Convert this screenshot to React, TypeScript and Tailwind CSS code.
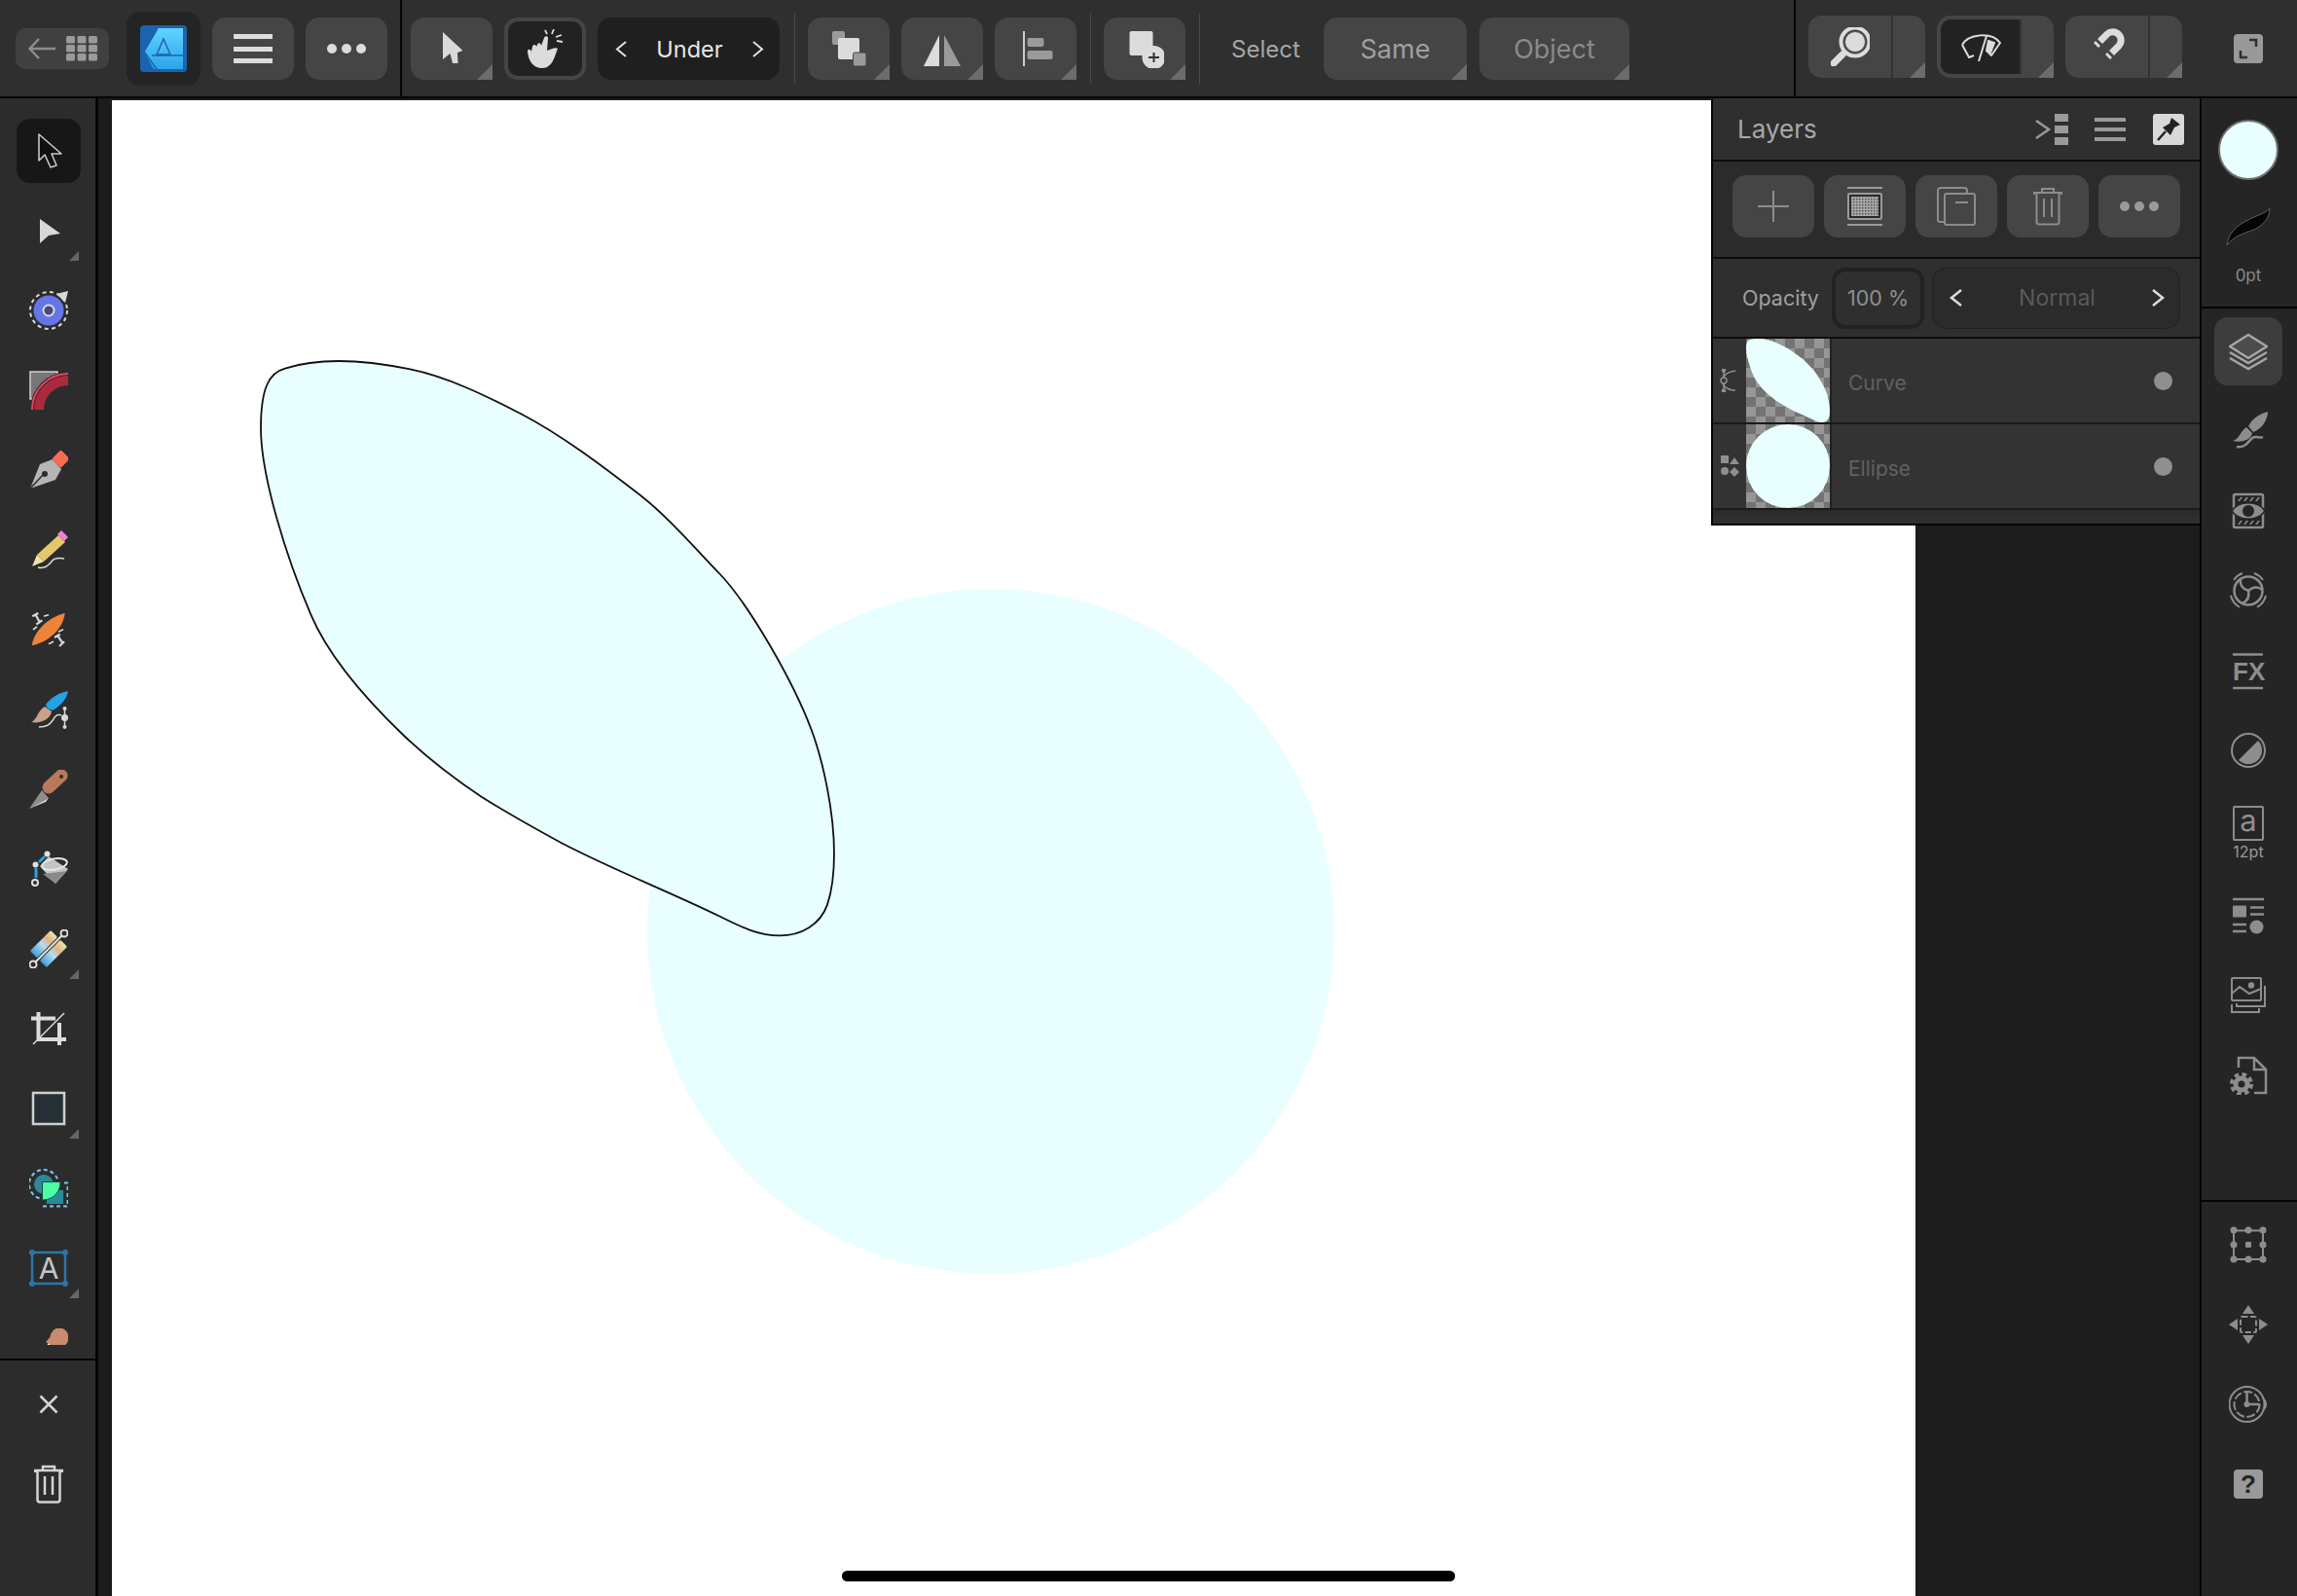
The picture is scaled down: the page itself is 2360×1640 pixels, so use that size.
import React from 'react';

const CURVE_PATH =
  'M292.9 378.6 C310 373 330 371 348 371 C372 371 397 374.5 421.4 379.4 C459 387 498 406 535.7 425.5 C576 446.5 618 478 658 509 C685 530 712 561 739.8 590 C770 622 815 700 833.7 750 C846 783 857 835 857 876.5 C857 896 855 915 850 929.6 C843 950 823 961.4 801 961.4 C780 961.4 762 953 739.8 941.8 C685 915 630 894 576.5 866 C549 851 522 836 495 819 C468 801 439 779 413 754 C385 727 340 680 319.4 631.6 C295 575 268 490 268 439.8 C268 420 270 405 274.5 395 C278 387 284 381 292.9 378.6 Z';

const Corner = ({ size = 'big' }: { size?: 'big' | 'small' }) =>
  size === 'big' ? (
    <span className="absolute right-0 bottom-0 w-4 h-4 bg-[#6c6c6c] [clip-path:polygon(100%_0,100%_100%,0_100%)]" />
  ) : (
    <span className="absolute right-[17px] bottom-[10px] w-[10px] h-[10px] bg-[#666666] [clip-path:polygon(100%_0,100%_100%,0_100%)]" />
  );

const Btn = ({ children, corner, className = '' }: { children: React.ReactNode; corner?: boolean; className?: string }) => (
  <div className={`relative h-16 w-[84px] shrink-0 rounded-[14px] bg-[#454545] flex items-center justify-center ${className}`}>
    {children}
    {corner && <Corner />}
  </div>
);

const Sep = ({ className = '' }: { className?: string }) => <div className={`w-px h-[72px] bg-[#4a4a4a] shrink-0 ${className}`} />;

const Ico = ({ s = 40, children, className = '' }: { s?: number; children: React.ReactNode; className?: string }) => (
  <svg width={s} height={s} viewBox={`0 0 ${s} ${s}`} className={`block shrink-0 ${className}`}>
    {children}
  </svg>
);

const Logo = () => (
  <svg width="48" height="48" viewBox="0 0 48 48">
    <defs>
      <linearGradient id="lg" x1="0" y1="0" x2="0" y2="1">
        <stop offset="0" stopColor="#62d4ff" />
        <stop offset="1" stopColor="#2ba4ea" />
      </linearGradient>
    </defs>
    <rect width="48" height="48" rx="4" fill="#1c63ae" />
    <path d="M18 3H44V45H14L4 27Z" fill="url(#lg)" />
    <path d="M18 3L4 27L19 48M24 14L17 30H31ZM12 31H44" fill="none" stroke="#1c63ae" strokeWidth="1.500" />
  </svg>
);

const Dots = ({ color }: { color: string }) => (
  <svg width="40" height="10" viewBox="0 0 40 10">
    <circle cx="5" cy="5" r="5" fill={color} />
    <circle cx="20" cy="5" r="5" fill={color} />
    <circle cx="35" cy="5" r="5" fill={color} />
  </svg>
);

const Trash = ({ color, w = 2.5 }: { color: string; w?: number }) => (
  <svg width="30" height="40" viewBox="0 0 30 40" fill="none" stroke={color} strokeWidth={w}>
    <path d="M1 8V6H29V8M9 6V2H21V6M3.500 7V36C3.500 38 4.500 38.500 6 38.500H24C25.500 38.500 26.500 38 26.500 36V7M11 12V31M19 12V31" />
  </svg>
);

/* left toolbar icons */
const tools: { icon: React.ReactNode; corner?: boolean; active?: boolean }[] = [
  {
    active: true,
    icon: (
      <Ico>
        <path d="M10 3V30L16 24L22 37L28 35L23 23H33Z" fill="#111111" stroke="#c8c8c8" strokeWidth="1.6" strokeLinejoin="round" />
      </Ico>
    ),
  },
  {
    corner: true,
    icon: (
      <Ico>
        <path d="M11 8L32 23L20 25L11 33Z" fill="#d9d9d9" />
      </Ico>
    ),
  },
  {
    icon: (
      <Ico>
        <circle cx="20" cy="20" r="19" fill="none" stroke="#d9d9d9" strokeWidth="2" strokeDasharray="4 3.500" />
        <circle cx="20" cy="20" r="15.500" fill="#6675e6" />
        <circle cx="20" cy="20" r="5.500" fill="#444a77" stroke="#d9d9d9" strokeWidth="2" />
        <path d="M28 3L40 0L37 12Z" fill="#d9d9d9" />
      </Ico>
    ),
  },
  {
    icon: (
      <Ico>
        <rect x="1" y="1" width="28" height="28" fill="#777777" stroke="#d0d0d0" strokeWidth="1.500" />
        <circle cx="40" cy="40" r="39" fill="#2c2c2c" />
        <circle cx="40" cy="40" r="37" fill="none" stroke="#f0405c" strokeWidth="2" />
        <circle cx="40" cy="40" r="30" fill="none" stroke="#aa2b3d" strokeWidth="10" />
      </Ico>
    ),
  },
  {
    icon: (
      <Ico>
        <path d="M1 39L11 14L24 9L33 19L27 30Z" fill="#b5b5b5" />
        <path d="M1 39L15 24" stroke="#2c2c2c" strokeWidth="1.500" />
        <circle cx="16" cy="24" r="3" fill="#2c2c2c" />
        <rect x="26" y="2" width="13" height="13" rx="1.500" transform="rotate(45 32.500 8.500)" fill="#fb6c52" />
      </Ico>
    ),
  },
  {
    icon: (
      <Ico>
        <path d="M3 37L8 25L15 32Z" fill="#f0e3b0" />
        <path d="M8 25L30 5L37 12L15 32Z" fill="#e2c76c" />
        <path d="M29 4L33 0L40 7L36 11Z" fill="#ef7fe0" />
        <path d="M9 38C16 40 20 36 23 32C25 29 30 28 36 29" fill="none" stroke="#d9d9d9" strokeWidth="1.500" />
      </Ico>
    ),
  },
  {
    icon: (
      <Ico>
        <path d="M2.700 36.300C5 22 18 8 36.700 3C35 18 22 32 2.700 36.300Z" fill="#ef833a" />
        <path d="M3.300 6.300L9.300 3M7.300 14.700L13.300 10.300M6.700 4.700L10.700 12.300M26 28L31.700 24.700M31 37L36 32.300M29.300 26.300L35 34.700" stroke="#d9d9d9" strokeWidth="2.200" fill="none" />
        <path d="M15 6.300L20 4.700M20 34.700L25 32.300M30 22.300L35 19.700M4 20L8 17" stroke="#d9d9d9" strokeWidth="1.600" />
      </Ico>
    ),
  },
  {
    icon: (
      <Ico>
        <path d="M19 19L17 15C22 8 30 3 40 1C39 8 34 15 24 21Z" fill="#23a2e6" />
        <path d="M16 17L23 22C22 30 12 35 2 33C8 31 8 22 16 17Z" fill="#c8a08c" />
        <path d="M10 38C20 38 22 34 25 30C27 26 30 25 33 26" fill="none" stroke="#d9d9d9" strokeWidth="1.500" />
        <path d="M36.500 19V38" stroke="#d9d9d9" strokeWidth="1.500" />
        <circle cx="36.500" cy="19" r="2" fill="#d9d9d9" />
        <circle cx="36.500" cy="28.500" r="3.500" fill="#d9d9d9" />
        <circle cx="36.500" cy="38" r="2" fill="#d9d9d9" />
      </Ico>
    ),
  },
  {
    icon: (
      <Ico>
        <path d="M20 18L33 6" stroke="#b8795c" strokeWidth="13" strokeLinecap="round" />
        <circle cx="33" cy="7" r="2" fill="#3a2a22" />
        <path d="M0 40L13 21L20 29Z" fill="#8d8d8d" />
        <path d="M0 40L20 29L17 33Z" fill="#d9d9d9" />
      </Ico>
    ),
  },
  {
    icon: (
      <Ico>
        <path d="M11 17L20 7L40 20L27 35Z" fill="#c4c4c4" />
        <path d="M14 25L39 22L27 35Z" fill="#8a8a8a" />
        <ellipse cx="26" cy="15" rx="13" ry="5.500" transform="rotate(-10 26 15)" fill="none" stroke="#e6e6e6" strokeWidth="2" />
        <path d="M7 19V29M10 13L16 7" stroke="#2aa0e2" strokeWidth="3" />
        <circle cx="6.500" cy="15.500" r="3" fill="#e0e0e0" />
        <circle cx="18.500" cy="4.500" r="3" fill="#e0e0e0" />
        <circle cx="6" cy="34" r="3" fill="#2c2c2c" stroke="#e0e0e0" strokeWidth="2" />
      </Ico>
    ),
  },
  {
    corner: true,
    icon: (
      <Ico>
        <defs>
          <linearGradient id="gr" x1="0" y1="0" x2="1" y2="0">
            <stop offset="0" stopColor="#3f9fd6" />
            <stop offset="0.45" stopColor="#b5dcf0" />
            <stop offset="0.7" stopColor="#e0b487" />
            <stop offset="1" stopColor="#ede2a6" />
          </linearGradient>
        </defs>
        <g transform="rotate(-45 20 20)">
          <rect x="5" y="8" width="30" height="10" rx="1.500" fill="url(#gr)" />
          <rect x="5" y="22" width="30" height="10" rx="1.500" fill="url(#gr)" />
          <path d="M-2 20H42" stroke="#e0e0e0" strokeWidth="2" />
        </g>
        <circle cx="4" cy="36" r="3.500" fill="#2c2c2c" stroke="#e0e0e0" strokeWidth="2" />
        <circle cx="36" cy="4" r="3.500" fill="#2c2c2c" stroke="#e0e0e0" strokeWidth="2" />
      </Ico>
    ),
  },
  {
    icon: (
      <Ico>
        <path d="M9.500 3V31H38M2 9.500H27M31 14V37" fill="none" stroke="#dcdcdc" strokeWidth="4" />
        <path d="M4 36L36 4" stroke="#dcdcdc" strokeWidth="1.500" />
      </Ico>
    ),
  },
  {
    corner: true,
    icon: (
      <Ico>
        <rect x="4" y="4" width="32" height="32" fill="#263036" stroke="#cfcfcf" strokeWidth="2.500" />
      </Ico>
    ),
  },
  {
    icon: (
      <Ico>
        <circle cx="15" cy="16" r="10" fill="#2a8a9c" />
        <circle cx="15" cy="16" r="15" fill="none" stroke="#7cc8ee" strokeWidth="2" strokeDasharray="4 3" />
        <path d="M18 22H35V36H18Z" fill="#2a8a9c" />
        <path d="M14 38.500H39.500V14.500H33" fill="none" stroke="#7cc8ee" strokeWidth="2" strokeDasharray="4 3" />
        <path d="M13.500 13.500H32C32 24 25 32 13.500 32Z" fill="#4dffa3" stroke="#1d4a4a" strokeWidth="1" />
      </Ico>
    ),
  },
  {
    corner: true,
    icon: (
      <Ico>
        <rect x="3" y="4" width="34" height="32" fill="none" stroke="#2c76a6" strokeWidth="2.500" />
        <circle cx="3" cy="4" r="3" fill="#2c76a6" />
        <circle cx="37" cy="4" r="3" fill="#2c76a6" />
        <circle cx="3" cy="36" r="3" fill="#2c76a6" />
        <circle cx="37" cy="36" r="3" fill="#2c76a6" />
        <text x="20" y="31" textAnchor="middle" fontFamily="Inter, sans-serif" fontSize="30" fill="#c4c4c4">
          A
        </text>
      </Ico>
    ),
  },
  {
    icon: (
      <Ico>
        <ellipse cx="31" cy="9.500" rx="9.500" ry="10" fill="#c98a6d" />
        <path d="M24 6L17 14L25 19Z" fill="#c98a6d" />
        <path d="M16 20L20 15L24 20Z" fill="#e6e6e6" />
      </Ico>
    ),
  },
];

const G = '#8d8d8d';

const RightItem = ({ children, h = 'h-[82px]' }: { children: React.ReactNode; h?: string }) => (
  <div className={`${h} shrink-0 flex flex-col items-center justify-center`}>{children}</div>
);

const rightIcons: React.ReactNode[] = [
  <Ico key="brush">
    <path d="M40 0C40 8 34 18 25 21L20 15C24 7 32 2 40 0Z" fill={G} />
    <path d="M18 16L24 22C22 30 12 32 4 30C11 28 11 21 18 16Z" fill={G} />
    <path d="M8 36C16 38 20 31 24 27C28 24 31 28 35 26" fill="none" stroke={G} strokeWidth="2.500" />
  </Ico>,
  <Ico key="adj">
    <rect x="5" y="3" width="30" height="34" rx="1.500" fill="none" stroke={G} strokeWidth="2.500" />
    <path d="M9 10L12 6H14L11 10ZM15 10L18 6H20L17 10ZM21 10L24 6H26L23 10ZM27 10L30 6H32L29 10ZM9 34L12 30H14L11 34ZM15 34L18 30H20L17 34ZM21 34L24 30H26L23 34ZM27 34L30 30H32L29 34Z" fill={G} />
    <path d="M3 20C10 9 30 9 37 20C30 31 10 31 3 20Z" fill={G} stroke="#252525" strokeWidth="1.500" />
    <circle cx="20" cy="20" r="6" fill="#252525" />
  </Ico>,
  <Ico key="aperture">
    <g fill="none" stroke={G} strokeWidth="2">
      <path d="M5 9A19 19 0 0 1 14 2M26 2A19 19 0 0 1 35 9M38 25A19 19 0 0 1 29 37M11 37A19 19 0 0 1 2 25" />
      <circle cx="20" cy="20" r="14.500" strokeWidth="2.500" />
      <path d="M12 8C11 14 14 18 20 20" strokeWidth="2.500" />
      <path d="M12 8C11 14 14 18 20 20" strokeWidth="2.500" transform="rotate(120 20 20)" />
      <path d="M12 8C11 14 14 18 20 20" strokeWidth="2.500" transform="rotate(240 20 20)" />
    </g>
  </Ico>,
  <Ico key="fx">
    <path d="M4 3.500H35M4 38H35" stroke={G} strokeWidth="2.500" />
    <text x="4" y="30" fontFamily="Liberation Sans, sans-serif" fontWeight="700" fontSize="26" fill={G}>
      FX
    </text>
  </Ico>,
  <Ico key="half">
    <circle cx="20" cy="20" r="17" fill="none" stroke={G} strokeWidth="2" />
    <path d="M10 29L30 9A14 14 0 0 1 10 29Z" fill={G} transform="translate(0 1)" />
  </Ico>,
];

const rightIconsAfter: React.ReactNode[] = [
  <Ico key="list">
    <path d="M4 3H36M22 11.500H36M22 18.500H36M4 29H18M4 36H18" stroke={G} strokeWidth="2.500" />
    <rect x="4" y="9.500" width="14" height="12" rx="1" fill={G} />
    <circle cx="28.500" cy="31.500" r="7" fill={G} />
  </Ico>,
  <Ico key="imgs">
    <rect x="3" y="2" width="30" height="23" rx="1" fill="none" stroke={G} strokeWidth="2" />
    <path d="M3 18L11 11L21 18L33 13" fill="none" stroke={G} strokeWidth="2" />
    <circle cx="23" cy="9.500" r="3.200" fill={G} />
    <path d="M37 10V31H8V28M3 29V37H31V33" fill="none" stroke={G} strokeWidth="2" />
  </Ico>,
  <Ico key="doc">
    <path d="M10 12V2H26L38 14V38H26" fill="none" stroke={G} strokeWidth="2.500" />
    <path d="M26 2V14H38" fill="none" stroke={G} strokeWidth="2.500" />
    <circle cx="13" cy="29" r="6" fill="none" stroke={G} strokeWidth="5" />
    <circle cx="13" cy="29" r="10" fill="none" stroke={G} strokeWidth="4" strokeDasharray="4.500 3.400" />
  </Ico>,
];

const rightIconsBottom: React.ReactNode[] = [
  <Ico key="transform">
    <rect x="5" y="5.500" width="30" height="29.500" fill="none" stroke={G} strokeWidth="2" />
    {[
      [5, 5],
      [20, 5],
      [35, 5],
      [5, 20],
      [35, 20],
      [5, 35],
      [20, 35],
      [35, 35],
    ].map(([x, y]) => (
      <circle key={`${x}-${y}`} cx={x} cy={y} r="3.500" fill={G} />
    ))}
    <rect x="17" y="17" width="6" height="6" rx="1" fill={G} />
  </Ico>,
  <Ico key="move">
    <path d="M20 0L26 9H14ZM20 40L14 31H26ZM0 20L9 14V26ZM40 20L31 26V14Z" fill={G} />
    <rect x="12" y="12" width="16" height="16" rx="1.500" fill="none" stroke={G} strokeWidth="2" strokeDasharray="6 2.500" />
  </Ico>,
  <Ico key="history">
    <circle cx="18.500" cy="20" r="18" fill="none" stroke={G} strokeWidth="2" />
    <path d="M36 14C40 16 40 24 36 26Z" fill={G} />
    <circle cx="18.500" cy="20" r="13" fill="none" stroke={G} strokeWidth="2" strokeDasharray="9 2.500" />
    <path d="M18.500 8V20H31" fill="none" stroke={G} strokeWidth="2.500" />
    <circle cx="18.500" cy="20" r="3" fill={G} />
  </Ico>,
  <div key="help" className="w-[30px] h-[30px] rounded-[4px] bg-[#9a9a9a] flex items-center justify-center text-[#252525] text-[26px] font-bold [font-family:'Liberation_Sans',sans-serif]">
    ?
  </div>,
];

const LayerRow = ({ icon, name, thumb }: { icon: React.ReactNode; name: string; thumb: React.ReactNode }) => (
  <div className="h-[88px] shrink-0 flex bg-[#333333] border-b-2 border-[#1a1a1a]">
    <div className="w-[34px] flex items-center justify-center">{icon}</div>
    <div className="relative w-[86px] h-[86px] overflow-hidden bg-[#767676] bg-[conic-gradient(#969696_25%,#737373_0_50%,#969696_0_75%,#737373_0)] bg-[length:20px_20px]">
      {thumb}
    </div>
    <div className="w-[2px] bg-[#222222]" />
    <div className="flex-1 flex items-center pl-[17px] pt-[6px] text-[21px] text-[#616161]">{name}</div>
    <div className="w-[19px] h-[19px] rounded-full bg-[#8f8f8f] self-center mr-[28px]" />
  </div>
);

export default function App() {
  return (
    <div className="w-[2360px] h-[1640px] flex flex-col overflow-hidden bg-[#1c1c1c] [font-family:Inter,sans-serif]">
      {/* top bar */}
      <div className="h-[101px] shrink-0 flex items-center pt-px bg-[#2f2f2f] border-b-2 border-[#050505]">
        <div className="ml-4 w-24 h-[42px] rounded-[10px] bg-[#404040] flex items-center justify-center gap-[11px] shrink-0">
          <svg width="28" height="22" viewBox="0 0 28 22" fill="none" stroke="#8c8c8c" strokeWidth="2.500">
            <path d="M11 1L1.500 11L11 21M2 11H28" />
          </svg>
          <svg width="32" height="26" viewBox="0 0 32 26" fill="#9a9a9a">
            {[0, 11.5, 23].map((x) =>
              [0, 9, 18].map((y) => <rect key={`${x}-${y}`} x={x} y={y} width="9" height="7.5" rx="1.5" />),
            )}
          </svg>
        </div>
        <div className="ml-[18px] w-[76px] h-[76px] rounded-[14px] bg-[#242424] flex items-center justify-center shrink-0">
          <Logo />
        </div>
        <Btn className="ml-3">
          <svg width="40" height="30" viewBox="0 0 40 30" fill="#dcdcdc">
            <rect width="40" height="5" />
            <rect y="13" width="40" height="5" />
            <rect y="25" width="40" height="5" />
          </svg>
        </Btn>
        <Btn className="ml-3">
          <Dots color="#dcdcdc" />
        </Btn>
        <div className="ml-[13px] w-0.5 self-stretch -mt-px bg-[#050505] shrink-0" />
        <Btn className="ml-[9px]" corner>
          <Ico>
            <path d="M11 3L31.500 22L26 24L26.500 35L21 35L18.500 25L11 31Z" fill="#d9d9d9" />
          </Ico>
        </Btn>
        <div className="ml-3 w-[84px] h-16 rounded-[14px] bg-[#222222] border-4 border-[#454545] flex items-center justify-center shrink-0">
          <Ico>
            <path d="M2 23C2 20 5 20 6 23L7 18C8 15 11 16 11 18L12 16C13 13 16 14 16 17L19 9C20 6 24 7 23 10L22 22C27 20 31 18 33 20C30 27 28 40 17 40C8 40 3 33 2 23Z" fill="#dcdcdc" />
            <path d="M20 1L22 5M29 0L27 5M37 6L31 8M38 13L32 12" stroke="#dcdcdc" strokeWidth="1.800" />
          </Ico>
        </div>
        <div className="ml-3 w-[187px] h-16 rounded-[14px] bg-[#1f1f1f] flex items-center justify-between pl-[18px] pr-[16px] text-[23.500px] text-[#e8e8e8] shrink-0">
          <svg width="13" height="17" viewBox="0 0 13 17" fill="none" stroke="#e0e0e0" strokeWidth="2">
            <path d="M11 1L2 8.500L11 16" />
          </svg>
          <span className="pt-0.5">Under</span>
          <svg width="13" height="17" viewBox="0 0 13 17" fill="none" stroke="#e0e0e0" strokeWidth="2">
            <path d="M2 1L11 8.500L2 16" />
          </svg>
        </div>
        <Sep className="ml-[15px]" />
        <Btn className="ml-[13px]" corner>
          <Ico>
            <rect x="3" y="2" width="13" height="14" rx="2" fill="#9a9a9a" />
            <rect x="9" y="9" width="22" height="22" rx="2" fill="#dcdcdc" />
            <rect x="24.500" y="24" width="13.500" height="14" rx="2" fill="#9a9a9a" stroke="#454545" />
          </Ico>
        </Btn>
        <Btn className="ml-3" corner>
          <Ico>
            <path d="M17 6V38H1Z" fill="#dcdcdc" strokeLinejoin="round" />
            <path d="M22 6V38H39Z" fill="#9a9a9a" />
          </Ico>
        </Btn>
        <Btn className="ml-3" corner>
          <Ico>
            <rect x="7" y="2" width="2" height="36" fill="#cccccc" />
            <rect x="11.500" y="9" width="17" height="9" rx="2" fill="#9a9a9a" />
            <rect x="11.500" y="22" width="26" height="9" rx="2" fill="#9a9a9a" />
          </Ico>
        </Btn>
        <Sep className="ml-3.5" />
        <Btn className="ml-[13px]" corner>
          <Ico>
            <rect x="4.500" y="2" width="24" height="25" rx="2" fill="#dcdcdc" />
            <circle cx="29.500" cy="29" r="12" fill="#dcdcdc" />
            <path d="M24 29H35M29.500 24V34" stroke="#333333" strokeWidth="2" />
          </Ico>
        </Btn>
        <Sep className="ml-3.5" />
        <span className="ml-8 w-[72px] pt-0.5 text-[24px] text-[#a6a6a6] shrink-0">Select</span>
        <Btn className="ml-[23px] w-[147px] pt-0.5 text-[27px] text-[#a0a0a0]" corner>
          Same
        </Btn>
        <Btn className="ml-[13px] w-[154px] pt-0.5 text-[27px] text-[#8a8a8a]" corner>
          Object
        </Btn>
        <div className="ml-[169px] w-0.5 self-stretch -mt-px bg-[#050505] shrink-0" />
        <div className="ml-[13px] mb-1 w-[120px] h-16 rounded-[14px] bg-[#454545] flex relative shrink-0">
          <div className="w-[85px] flex items-center justify-center">
            <Ico>
              <path d="M12 28L3 37" stroke="#dcdcdc" strokeWidth="7" strokeLinecap="round" />
              <circle cx="25" cy="15" r="14.500" fill="none" stroke="#dcdcdc" strokeWidth="4" />
              <circle cx="25" cy="15" r="10.500" fill="#dcdcdc" stroke="#555555" strokeWidth="1" />
            </Ico>
          </div>
          <div className="w-0.5 bg-[#333333]" />
          <Corner />
        </div>
        <div className="ml-3 mb-1 w-[120px] h-16 rounded-[14px] bg-[#454545] flex relative shrink-0 border-4 border-r-0 border-[#454545]">
          <div className="w-[81px] bg-[#222222] rounded-l-[10px] flex items-center justify-center">
            <svg width="42" height="32" viewBox="0 0 42 32" fill="none" stroke="#dcdcdc" strokeWidth="2">
              <path d="M2 14C8 3 32 0 41 12L32 25L27 20M14 25L9 27L2 14" strokeLinejoin="round" />
              <path d="M19 31L27 5" />
              <path d="M29 10L35 12L31 22L27 20Z" fill="#dcdcdc" />
            </svg>
          </div>
          <div className="w-0.5 bg-[#333333]" />
          <span className="absolute right-0 bottom-[-4px] w-4 h-4 bg-[#6c6c6c] [clip-path:polygon(100%_0,100%_100%,0_100%)]" />
        </div>
        <div className="ml-3 mb-1 w-[120px] h-16 rounded-[14px] bg-[#454545] flex relative shrink-0">
          <div className="w-[85px] flex items-center justify-center">
            <Ico s={38}>
              <path d="M11.500 13.500L19 6A8.500 8.500 0 0 1 31 18L23.500 25.500" fill="none" stroke="#dcdcdc" strokeWidth="7" />
              <path d="M7.500 17.500L9.500 15.500M19.500 29.500L21.500 27.500" fill="none" stroke="#dcdcdc" strokeWidth="7" />
            </Ico>
          </div>
          <div className="w-0.5 bg-[#333333]" />
          <Corner />
        </div>
        <div className="ml-[53px] mb-px w-[30px] h-[30px] rounded-[4px] bg-[#999999] flex items-center justify-center shrink-0">
          <svg width="20" height="22" viewBox="0 0 20 22" fill="none" stroke="#2f2f2f" strokeWidth="2.500">
            <path d="M11 2H18V9M2 13V20H9" />
          </svg>
        </div>
      </div>

      <div className="relative flex-1 flex min-h-0">
        {/* left toolbar */}
        <div className="w-[101px] shrink-0 flex flex-col bg-[#2c2c2c] border-r-[3px] border-[#050505]">
          <div className="h-[1295px] shrink-0 pb-3 border-b-2 border-transparent">
            <div className="h-full overflow-hidden pt-[13px] pl-0.5 flex flex-col">
              {tools.map((t, i) => (
                <div key={i} className="relative h-[82px] shrink-0 flex items-center justify-center">
                  {t.active && <div className="absolute left-[15px] top-2 w-[66px] h-[66px] rounded-[14px] bg-[#171717]" />}
                  <div className="relative">{t.icon}</div>
                  {t.corner && <Corner size="small" />}
                </div>
              ))}
            </div>
          </div>
          <div className="h-0.5 bg-[#050505] shrink-0" />
          <div className="flex flex-col pt-1 pl-0.5 items-center">
            <div className="h-[82px] flex items-center justify-center">
              <svg width="20" height="20" viewBox="0 0 20 20" stroke="#d4d4d4" strokeWidth="2.500">
                <path d="M1.500 1.500L18.500 18.500M18.500 1.500L1.500 18.500" />
              </svg>
            </div>
            <div className="h-[82px] flex items-center justify-center">
              <Trash color="#d4d4d4" />
            </div>
          </div>
        </div>

        {/* canvas */}
        <div className="flex-1 pl-3.5 pt-0.5 min-w-0">
          <div className="relative w-[1853px] h-full bg-white overflow-hidden">
            <svg viewBox="115 103 1853 1537" className="absolute inset-0 w-full h-full">
              <ellipse cx="1018" cy="957" rx="353" ry="352" fill="#e9ffff" />
              <path d={CURVE_PATH} fill="#e9ffff" stroke="#111111" strokeWidth="1.800" />
            </svg>
            <div className="absolute left-[750px] top-[1511px] w-[630px] h-[11px] rounded-full bg-black" />
          </div>
        </div>

        {/* right toolbar */}
        <div className="w-[100px] shrink-0 flex flex-col pr-0.5 bg-[#252525] border-l-2 border-[#050505] text-[#8d8d8d]">
          <div className="h-[216px] -mr-0.5 pr-0.5 shrink-0 flex flex-col items-center pt-[22px] border-b-2 border-[#050505]">
            <div className="w-[62px] h-[62px] rounded-full bg-[#e9ffff] border-2 border-[#6e6e6e]" />
            <svg width="46" height="40" viewBox="0 0 46 40" className="mt-7">
              <path d="M1 39C3 22 18 15 29 10C36 7 42 5 45 1C45 12 37 19 29 23C18 27 9 29 1 39Z" fill="#050505" stroke="#5f5f5f" strokeWidth="1" />
            </svg>
            <span className="mt-5 text-[17px] leading-5 text-[#8a8a8a]">0pt</span>
          </div>
          <div className="flex-1 -mr-0.5 pr-0.5 flex flex-col pt-[3px] border-b-2 border-[#050505]">
            <RightItem>
              <div className="w-[70px] h-[70px] rounded-[14px] bg-[#3d3d3d] flex items-center justify-center">
                <Ico>
                  <path d="M20 3L39 15L20 27L1 15Z" fill="#4c4c4c" stroke="#a6a6a6" strokeWidth="2.500" strokeLinejoin="round" />
                  <path d="M1 21L20 32L39 21M1 27L20 38L39 27" fill="none" stroke="#a6a6a6" strokeWidth="2.500" />
                </Ico>
              </div>
            </RightItem>
            {rightIcons.map((icon, i) => (
              <RightItem key={i}>{icon}</RightItem>
            ))}
            <RightItem h="h-[88px]">
              <div className="w-[32px] h-[36px] border-2 border-[#8d8d8d] rounded-[2px] flex items-center justify-center text-[31px] leading-none pb-1.5 text-[#8d8d8d]">a</div>
              <span className="mt-[1px] text-[16px] leading-5 text-[#9a9a9a]">12pt</span>
            </RightItem>
            {rightIconsAfter.map((icon, i) => (
              <RightItem key={i}>{icon}</RightItem>
            ))}
          </div>
          <div className="shrink-0 pt-[3px] h-[405px] flex flex-col">
            {rightIconsBottom.map((icon, i) => (
              <RightItem key={i}>{icon}</RightItem>
            ))}
          </div>
        </div>

        {/* layers panel */}
        <div className="absolute left-[1758px] top-0 w-[502px] h-[439px] flex flex-col bg-[#2f2f2f] border-l-2 border-b-2 border-[#050505]">
          <div className="h-[65px] shrink-0 flex items-center pl-[25px] pr-4 border-b-2 border-[#0c0c0c]">
            <span className="text-[26px] text-[#a8a8a8]">Layers</span>
            <svg width="34" height="34" viewBox="0 0 34 34" className="ml-auto" fill="#9a9a9a">
              <path d="M1 8L14 17L1 26" fill="none" stroke="#9a9a9a" strokeWidth="2.500" />
              <rect x="20" y="1" width="14" height="8" />
              <rect x="20" y="13" width="14" height="8" />
              <rect x="20" y="25" width="14" height="8" />
            </svg>
            <svg width="32" height="24" viewBox="0 0 32 24" className="ml-[27px]" fill="#9a9a9a">
              <rect width="32" height="4" />
              <rect y="10" width="32" height="4" />
              <rect y="20" width="32" height="4" />
            </svg>
            <div className="ml-7 w-8 h-8 rounded-[3px] bg-[#d9d9d9] flex items-center justify-center">
              <svg width="28" height="28" viewBox="0 0 28 28">
                <path d="M17 2L26 9L20 12L16 20L8 12L15 8Z" fill="#222222" />
                <path d="M11 16L3 25" stroke="#222222" strokeWidth="2.500" />
              </svg>
            </div>
          </div>
          <div className="h-[100px] shrink-0 flex gap-2.5 pl-5 pt-3.5 bg-[#2b2b2b] border-b-2 border-[#0c0c0c]">
            <Btn>
              <svg width="32" height="32" viewBox="0 0 32 32" stroke="#8c8c8c" strokeWidth="2">
                <path d="M16 0V32M0 16H32" />
              </svg>
            </Btn>
            <Btn>
              <svg width="36" height="40" viewBox="0 0 36 40">
                <defs>
                  <pattern id="dots" width="3" height="3" patternUnits="userSpaceOnUse">
                    <rect width="3" height="3" fill="#a8a8a8" />
                    <rect width="1.500" height="1.500" fill="#555555" />
                  </pattern>
                </defs>
                <path d="M0 1H36M0 39H36" stroke="#9a9a9a" strokeWidth="2" />
                <rect x="1" y="7" width="34" height="26" rx="1" fill="#2b2b2b" stroke="#9a9a9a" strokeWidth="2" />
                <rect x="4" y="10" width="28" height="20" fill="url(#dots)" />
              </svg>
            </Btn>
            <Btn>
              <svg width="40" height="40" viewBox="0 0 40 40" fill="none" stroke="#8c8c8c" strokeWidth="2">
                <path d="M8 36H3C1.500 36 1 35.500 1 34V4C1 2 2 1 4 1H28C30 1 31 2 31 4V7" />
                <rect x="8" y="7" width="31" height="32" rx="2" />
                <path d="M19 16H32" />
              </svg>
            </Btn>
            <Btn>
              <Trash color="#8c8c8c" w={2} />
            </Btn>
            <Btn>
              <Dots color="#9a9a9a" />
            </Btn>
          </div>
          <div className="h-[82px] shrink-0 flex items-center pl-[30px] border-b-2 border-[#0c0c0c]">
            <span className="w-[92px] text-[21.500px] text-[#a0a0a0]">Opacity</span>
            <div className="w-[95px] h-[63px] rounded-[14px] border-4 border-[#222222] flex items-center justify-center text-[21.500px] text-[#8f8f8f]">100 %</div>
            <div className="ml-2 w-[255px] h-[63px] rounded-[14px] border border-[#222222] bg-[#2b2b2b] flex items-center justify-between pl-[17px] pr-[15px] text-[23px] text-[#5a5a5a]">
              <svg width="14" height="18" viewBox="0 0 14 18" fill="none" stroke="#dcdcdc" strokeWidth="2.500">
                <path d="M12 1L2 9L12 17" />
              </svg>
              <span>Normal</span>
              <svg width="14" height="18" viewBox="0 0 14 18" fill="none" stroke="#dcdcdc" strokeWidth="2.500">
                <path d="M2 1L12 9L2 17" />
              </svg>
            </div>
          </div>
          <LayerRow
            name="Curve"
            icon={
              <svg width="18" height="24" viewBox="0 0 18 24" fill="none" stroke="#8f8f8f" strokeWidth="1.500" className="mr-1">
                <path d="M17 2C8 3 3 8 4 12C3 17 8 22 17 22" />
                <path d="M5 1V23" />
                <circle cx="5" cy="1.500" r="1.500" fill="#8f8f8f" />
                <circle cx="5" cy="12" r="3" fill="#333333" />
                <circle cx="5" cy="22.500" r="1.500" fill="#8f8f8f" />
              </svg>
            }
            thumb={
              <svg viewBox="268 371 589 590" className="absolute inset-0 w-full h-full">
                <path d={CURVE_PATH} fill="#e9ffff" />
              </svg>
            }
          />
          <LayerRow
            name="Ellipse"
            icon={
              <svg width="20" height="24" viewBox="0 0 20 24" fill="#8f8f8f">
                <rect x="1" y="1" width="8" height="8" />
                <path d="M15 3L20 10H10Z" />
                <circle cx="5" cy="17" r="4" />
                <path d="M15 13L20 18L15 23L10 18Z" />
              </svg>
            }
            thumb={<div className="absolute inset-0 rounded-full bg-[#e9ffff]" />}
          />
          <div className="h-1.5 shrink-0 bg-[#2b2b2b]" />
        </div>
      </div>
    </div>
  );
}
